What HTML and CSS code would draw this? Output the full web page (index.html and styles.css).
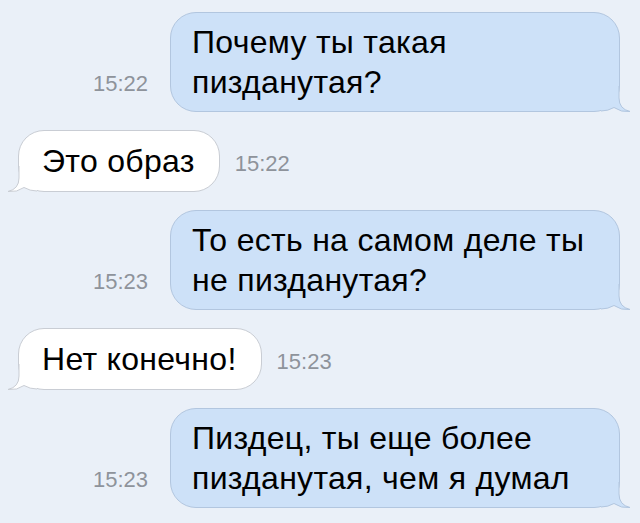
FILE: index.html
```html
<!DOCTYPE html>
<html lang="ru">
<head>
    <meta charset="UTF-8">
    <meta name="viewport" content="width=device-width, initial-scale=1.0">
    <title>Сообщения</title>
    <link rel="stylesheet" href="styles.css">
</head>
<body>
    <div class="chat">
        <div class="row out">
            <span class="time">15:22</span>
            <div class="bubble">
                Почему ты такая<br>пизданутая?
                <svg class="tail" viewBox="0 0 30 26" width="30" height="26"><path class="tail-fill" d="M0 0 H18 V12 Q18 23 29 25.5 Q20 26.5 13 21.5 Q7 25 0 25 Z"/><path class="tail-line" d="M18 0 V12 Q18 23 29 25.5 Q20 26.5 13 21.5 Q7 25 0 25"/></svg>
            </div>
        </div>

        <div class="row in">
            <div class="bubble">
                Это образ
                <svg class="tail" viewBox="0 0 30 26" width="30" height="26"><path class="tail-fill" d="M30 0 H12 V12 Q12 23 1 25.5 Q10 26.5 17 21.5 Q23 25 30 25 Z"/><path class="tail-line" d="M12 0 V12 Q12 23 1 25.5 Q10 26.5 17 21.5 Q23 25 30 25"/></svg>
            </div>
            <span class="time">15:22</span>
        </div>

        <div class="row out">
            <span class="time">15:23</span>
            <div class="bubble">
                То есть на самом деле ты<br>не пизданутая?
                <svg class="tail" viewBox="0 0 30 26" width="30" height="26"><path class="tail-fill" d="M0 0 H18 V12 Q18 23 29 25.5 Q20 26.5 13 21.5 Q7 25 0 25 Z"/><path class="tail-line" d="M18 0 V12 Q18 23 29 25.5 Q20 26.5 13 21.5 Q7 25 0 25"/></svg>
            </div>
        </div>

        <div class="row in">
            <div class="bubble">
                Нет конечно!
                <svg class="tail" viewBox="0 0 30 26" width="30" height="26"><path class="tail-fill" d="M30 0 H12 V12 Q12 23 1 25.5 Q10 26.5 17 21.5 Q23 25 30 25 Z"/><path class="tail-line" d="M12 0 V12 Q12 23 1 25.5 Q10 26.5 17 21.5 Q23 25 30 25"/></svg>
            </div>
            <span class="time">15:23</span>
        </div>

        <div class="row out">
            <span class="time">15:23</span>
            <div class="bubble">
                Пиздец, ты еще более<br>пизданутая, чем я думал
                <svg class="tail" viewBox="0 0 30 26" width="30" height="26"><path class="tail-fill" d="M0 0 H18 V12 Q18 23 29 25.5 Q20 26.5 13 21.5 Q7 25 0 25 Z"/><path class="tail-line" d="M18 0 V12 Q18 23 29 25.5 Q20 26.5 13 21.5 Q7 25 0 25"/></svg>
            </div>
        </div>
    </div>
</body>
</html>
```

FILE: styles.css
```css
:root {
    --background-color: #eaf0f8;
    --out-color: #cde1f8;
    --out-border: #b2c6df;
    --in-color: #ffffff;
    --in-border: #c9cdd4;
    --time-color: #8e939b;
}

body {
    margin: 0;
    padding: 0;
    background: var(--background-color);
    font-family: "Liberation Sans", Arial, sans-serif;
    color: #000;
}

.chat {
    display: flex;
    flex-direction: column;
    gap: 18px;
    padding: 12px 20px 0 18px;
}

.row {
    display: flex;
    align-items: flex-end;
}

.row.out {
    justify-content: flex-end;
    gap: 22px;
}

.row.in {
    align-items: center;
    gap: 15px;
}

.bubble {
    position: relative;
    padding: 9px 21px;
    font-size: 32px;
    letter-spacing: 0.3px;
    line-height: 40px;
    border-radius: 26px;
}

.out .bubble {
    width: 450px;
    box-sizing: border-box;
    background: var(--out-color);
    border: 1px solid var(--out-border);
}

.in .bubble {
    padding: 10px 24px 10px 23px;
    background: var(--in-color);
    border: 1px solid var(--in-border);
}

.time {
    font-size: 22px;
    line-height: 26px;
    color: var(--time-color);
}

.out .time {
    margin-bottom: 15px;
}

.in .time {
    margin-top: 5px;
}

.tail {
    position: absolute;
    bottom: -1px;
    overflow: visible;
}

.out .tail {
    right: -12px;
}

.in .tail {
    left: -12px;
}

.tail-line {
    fill: none;
    stroke-width: 1;
}

.out .tail-fill {
    fill: var(--out-color);
}

.out .tail-line {
    stroke: var(--out-border);
}

.in .tail-fill {
    fill: var(--in-color);
}

.in .tail-line {
    stroke: var(--in-border);
}
```
